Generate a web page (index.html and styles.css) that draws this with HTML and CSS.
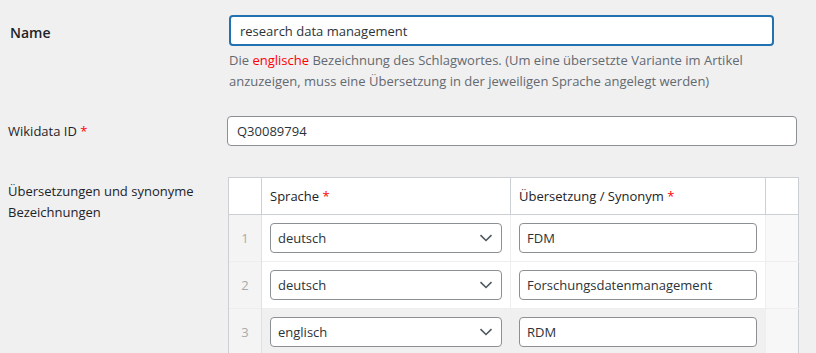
FILE: index.html
```html
<!DOCTYPE html>
<html lang="de">
<head>
<meta charset="utf-8">
<title>Schlagwort bearbeiten</title>
<link rel="stylesheet" href="styles.css">
</head>
<body>
<div class="page">
  <div class="row row-name">
    <div class="label label-strong">Name</div>
    <div class="field">
      <input class="text text-focus" type="text" value="research data management">
      <p class="desc">Die <span class="red">englische</span> Bezeichnung des Schlagwortes. (Um eine übersetzte Variante im Artikel<br>anzuzeigen, muss eine Übersetzung in der jeweiligen Sprache angelegt werden)</p>
    </div>
  </div>

  <div class="row row-wiki">
    <div class="label label-acf">Wikidata ID <span class="req">*</span></div>
    <div class="field">
      <input class="text text-wide" type="text" value="Q30089794">
    </div>
  </div>

  <div class="row row-rep">
    <div class="label label-acf label-rep">Übersetzungen und synonyme<br>Bezeichnungen</div>
    <div class="field">
      <table class="rep">
        <colgroup>
          <col class="c-order"><col class="c-lang"><col class="c-syn"><col class="c-remove">
        </colgroup>
        <thead>
          <tr>
            <th class="h-handle"></th>
            <th>Sprache <span class="req">*</span></th>
            <th>Übersetzung / Synonym <span class="req">*</span></th>
            <th class="h-handle"></th>
          </tr>
        </thead>
        <tbody>
          <tr>
            <td class="order">1</td>
            <td><div class="select"><span>deutsch</span><svg width="14" height="8" viewBox="0 0 14 8"><path d="M1.5 1.2 7 6.5 12.5 1.2" fill="none" stroke="#50575e" stroke-width="1.6"/></svg></div></td>
            <td><div class="input">FDM</div></td>
            <td class="remove"></td>
          </tr>
          <tr>
            <td class="order">2</td>
            <td><div class="select"><span>deutsch</span><svg width="14" height="8" viewBox="0 0 14 8"><path d="M1.5 1.2 7 6.5 12.5 1.2" fill="none" stroke="#50575e" stroke-width="1.6"/></svg></div></td>
            <td><div class="input">Forschungsdatenmanagement</div></td>
            <td class="remove"></td>
          </tr>
          <tr class="hover">
            <td class="order">3</td>
            <td><div class="select"><span>englisch</span><svg width="14" height="8" viewBox="0 0 14 8"><path d="M1.5 1.2 7 6.5 12.5 1.2" fill="none" stroke="#50575e" stroke-width="1.6"/></svg></div></td>
            <td><div class="input">RDM</div></td>
            <td class="remove"></td>
          </tr>
        </tbody>
      </table>
    </div>
  </div>
</div>
</body>
</html>
```

FILE: styles.css
```css
* { box-sizing: border-box; }

html, body {
  margin: 0;
  padding: 0;
  background: #f0f0f1;
}

body {
  font-family: "Open Sans", "Noto Sans", sans-serif;
  font-size: 13px;
  color: #1d2327;
  overflow: hidden;
}

.page {
  padding: 15px 18px 0 0;
}

.row {
  display: flex;
}

.label {
  width: 228px;
  flex: none;
  line-height: 20px;
}

.label-strong {
  font-weight: 600;
  font-size: 14px;
  padding: 8px 0 0 10px;
  color: #1d2327;
}

.label-acf {
  padding-left: 8px;
}

.field {
  flex: 1;
  min-width: 0;
}

.text {
  display: block;
  font-family: inherit;
  font-size: 13px;
  color: #2c3338;
  background: #fff;
  border: 1px solid #8c8f94;
  border-radius: 4px;
  padding: 0 8px;
  margin: 0;
  outline: none;
}

.text-focus {
  width: 545px;
  height: 31px;
  margin-left: 1px;
  border: 2px solid #2271b1;
  padding-left: 9px;
}

.desc {
  margin: 4px 0 0 1px;
  font-size: 13px;
  line-height: 21px;
  color: #646970;
}

.red { color: #f00; }
.req { color: #f00; }

.row-wiki {
  margin-top: 24px;
}

.row-wiki .label {
  padding-top: 5px;
}

.text-wide {
  width: 570px;
  height: 30px;
  margin-left: -1px;
  padding-left: 9px;
}

.row-rep {
  margin-top: 31px;
}

.label-rep {
  padding-top: 4px;
  line-height: 21px;
}

.rep {
  width: 570px;
  table-layout: fixed;
  border-collapse: collapse;
  background: #fff;
  border: 1px solid #ccd0d4;
}

.c-order { width: 33px; }
.c-lang { width: 249px; }
.c-syn { width: 255px; }
.c-remove { width: 33px; }

.rep th {
  font-weight: 400;
  text-align: left;
  padding: 8px 8px;
  height: 36px;
  line-height: 20px;
  color: #1d2327;
  border-left: 1px solid #ccd0d4;
  border-bottom: 1px solid #ccd0d4;
}

.rep td {
  padding: 8px;
  height: 47px;
  border-top: 1px solid #eee;
  border-left: 1px solid #eee;
  vertical-align: middle;
}

.rep td.order {
  background: #f4f4f4;
  color: #aaa;
  text-align: center;
  padding: 0;
  border-left: 1px solid #ccd0d4;
  border-right: 1px solid #e1e1e1;
}

.rep td.remove {
  background: #f9f9f9;
  padding: 0;
}

.rep tr.hover td {
  background: #f0f0f0;
}

.rep tr.hover td.order {
  background: #f4f4f4;
}

.rep tr.hover td.remove {
  background: #f7f7f7;
}

.select,
.input {
  height: 30px;
  background: #fff;
  border: 1px solid #8c8f94;
  border-radius: 4px;
  color: #2c3338;
  display: flex;
  align-items: center;
  line-height: 20px;
}

.select {
  justify-content: space-between;
  padding: 0 8px 0 7px;
}

.select svg {
  display: block;
}

.input {
  padding: 0 7px;
}
```
